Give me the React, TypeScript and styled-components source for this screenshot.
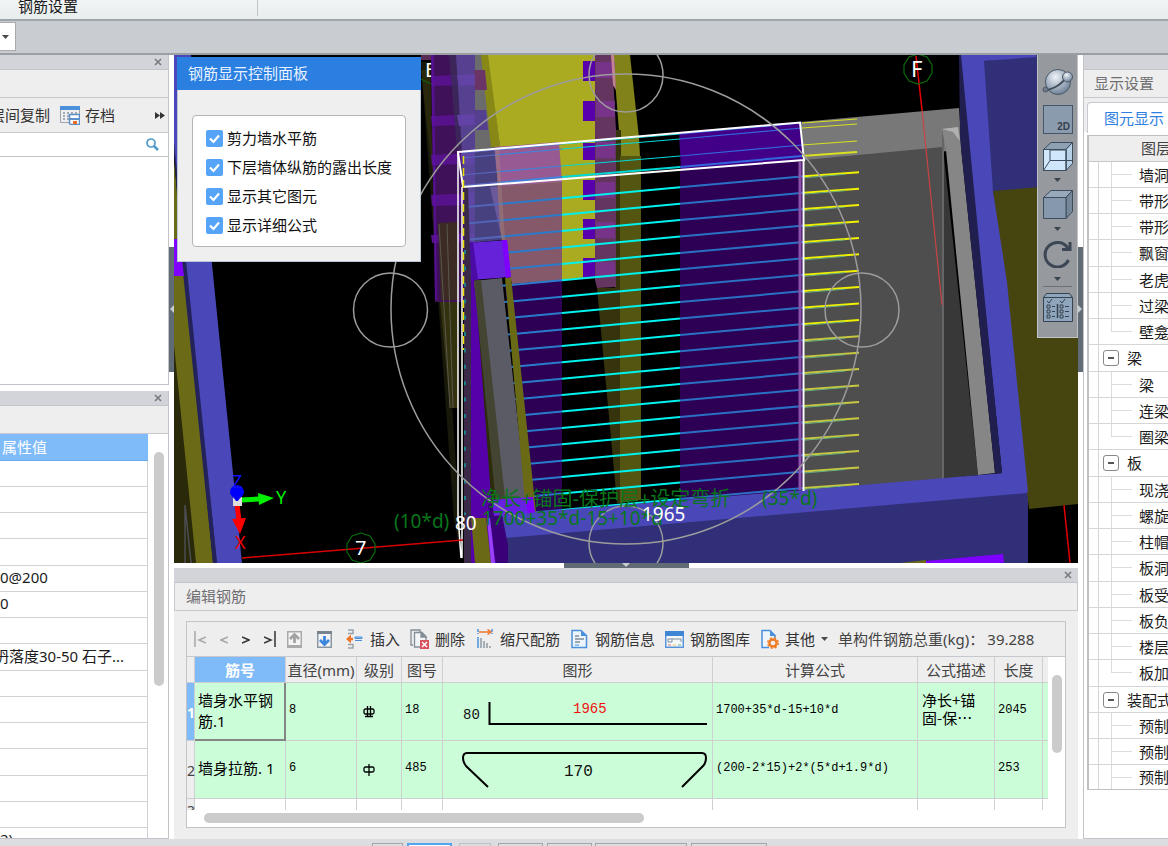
import React from 'react';
import styled, { createGlobalStyle, css } from 'styled-components';

const ui = '"Noto Sans", "Noto Sans CJK SC", sans-serif';
const mono = '"Liberation Mono", "Noto Sans CJK SC", monospace';

const GlobalStyle = createGlobalStyle`
  * { box-sizing: border-box; }
  body { margin: 0; background: #fff; color: #1c1c1c; font: 15px/20px ${ui}; overflow: hidden; }
  button, select, input { font: inherit; color: inherit; margin: 0; padding: 0; border: 0; background: none; }
  ul { list-style: none; margin: 0; padding: 0; }
  svg { display: block; flex: none; }
`;

/* ---------- window frame ---------- */

const Shell = styled.div`
  display: flex;
  flex-direction: column;
  height: 100vh;
  min-height: 640px;
  overflow: hidden;
`;

const Ribbon = styled.header`
  display: flex;
  flex: none;
  height: 21px;
  background: linear-gradient(#f2f5f6, #e7ecec);
  border-bottom: 2px solid #9ea6ac;
`;

const RibbonGroup = styled.div`
  width: 258px;
  height: 16px;
  padding-left: 18px;
  line-height: 12px;
  border-right: 1px solid #c3c3c5;
`;

const OptionBar = styled.div`
  display: flex;
  align-items: center;
  flex: none;
  height: 34px;
  padding-bottom: 1px;
  background: #c9ccd0;
  border-bottom: 2px solid #9a9fa4;
`;

const ComboBox = styled.div`
  display: grid;
  align-items: center;
  width: 16px;
  height: 29px;
  background: #fff;
  border: 1px solid #aaaaac;
  border-left: 0;
  svg, select { grid-area: 1 / 1; }
  svg { margin-left: 2px; pointer-events: none; }
  select { width: 15px; height: 27px; appearance: none; }
`;

const Workspace = styled.main`
  display: grid;
  grid-template-columns: 169px minmax(0, 1fr) 85px;
  flex: 1;
  min-height: 0;
`;

const StatusStrip = styled.footer`
  display: flex;
  flex: none;
  height: 7px;
  padding: 4px 0 0 372px;
  overflow: hidden;
  background: #dcdde0;
`;

const StripButton = styled.button<{ $w: number; $after: number; $tone?: 'active' | 'faint' }>`
  && {
    flex: none;
    width: ${p => p.$w}px;
    height: 22px;
    margin-right: ${p => p.$after}px;
    border: 1px solid #a4a5a8;
    ${p => p.$tone === 'active' && css`background: #fff; border: 2px solid #55a5ee;`}
    ${p => p.$tone === 'faint' && css`border-color: #bfc0c2;`}
  }
`;

/* ---------- docked panels ---------- */

const Column = styled.div`
  display: flex;
  flex-direction: column;
  gap: 6px;
  min-height: 0;
`;

const Dock = styled.section<{ $h?: number }>`
  display: flex;
  flex-direction: column;
  flex: ${p => (p.$h ? `0 0 ${p.$h}px` : '1')};
  min-height: 0;
  overflow: hidden;
  background: #fff;
  border-right: 1px solid #c3c4c8;
  border-bottom: 1px solid #c3c4c8;
`;

const Grip = styled.div`
  display: flex;
  align-items: center;
  justify-content: flex-end;
  flex: none;
  height: 15px;
  padding-right: 5px;
  background: #d3d4d9;
  border-bottom: 1px solid #c3c5cb;
`;

const Caption = styled.div<{ $indent?: number }>`
  flex: none;
  height: 28px;
  padding-left: ${p => p.$indent ?? 0}px;
  line-height: 27px;
  color: #6f6f72;
  background: #eee;
  border-bottom: 1px solid #c6c8ce;
  white-space: nowrap;
`;

const CloseButton = styled.button`
  display: flex;
  align-items: center;
  justify-content: center;
  width: 10px;
  height: 14px;
`;

const CopyBar = styled.div`
  display: flex;
  align-items: center;
  flex: none;
  height: 35px;
  background: #eee;
  border-bottom: 1px solid #c6c8ce;
  color: #333;
`;

const BarButton = styled.button<{ $gap?: number }>`
  display: flex;
  align-items: center;
  gap: ${p => p.$gap ?? 6}px;
  flex: none;
  white-space: nowrap;
  color: #333;
`;

const CopyLabel = styled(BarButton)`&& { margin: 0 10px 0 -10px; }`;
const MoreButton = styled(BarButton)`&& { margin: 0 3px 0 auto; }`;

const SearchRow = styled.label`
  display: flex;
  align-items: center;
  flex: none;
  height: 24px;
  padding-right: 9px;
  border-bottom: 1px solid #c3c4c8;
  input { flex: 1; min-width: 0; height: 22px; outline: 0; }
`;

const PropertyBody = styled.div`
  display: grid;
  grid-template-columns: minmax(0, 1fr) 20px;
  flex: 1;
  min-height: 0;
  overflow: hidden;
`;

const PropertyTable = styled.table`
  width: 100%;
  align-self: start;
  border-collapse: separate;
  border-spacing: 0;
  table-layout: fixed;
  th {
    height: 27px;
    padding: 0 0 0 2px;
    text-align: left;
    font-weight: 400;
    color: #fff;
    background: #7fbbf9;
    border-bottom: 1px solid #6baaf0;
  }
  td {
    height: 26px;
    padding: 0 0 3px;
    white-space: nowrap;
    overflow: hidden;
    border-right: 1px solid #d2d2d4;
    border-bottom: 1px solid #d2d2d4;
  }
  tr:nth-child(4n) td { height: 27px; }
`;

const Shifted = styled.span`margin-left: -6px;`;

const Thumb = styled.div<{ $w?: number; $h?: number }>`
  width: ${p => p.$w ?? 10}px;
  height: ${p => p.$h ?? 10}px;
  background: #cbcbcb;
  border-radius: 5px;
`;

const ThumbTrack = styled.div<{ $top: number; $left?: number }>`
  padding: ${p => p.$top}px 0 0 ${p => p.$left ?? 6}px;
`;

/* ---------- centre ---------- */

const Centre = styled.div`
  display: grid;
  grid-template-columns: 5px minmax(0, 1fr) 5px;
  grid-template-rows: minmax(0, 1fr) 5px auto;
  min-height: 0;
`;

const SideHandle = styled.button`
  && {
    display: flex;
    align-items: center;
    justify-content: center;
    align-self: center;
    width: 5px;
    height: 125px;
    background: #606b76;
  }
`;

const BottomHandle = styled.button`
  && {
    grid-area: 2 / 2;
    display: flex;
    justify-content: center;
    justify-self: center;
    width: 125px;
    height: 5px;
    background: #606b76;
  }
`;

const Viewport = styled.div`
  position: relative;
  min-height: 0;
  overflow: hidden;
  background: #000;
`;

const SceneSvg = styled.svg`
  width: 100%;
  height: 100%;
  font-family: ${ui};
`;

const Dialog = styled.section`
  position: absolute;
  top: 2px;
  left: 3px;
  width: 244px;
  background: #efefef;
  border: 1px solid #b9c6d8;
  border-top: 0;
`;

const DialogTitle = styled.h2`
  margin: 0 -1px;
  padding-left: 11px;
  height: 33px;
  font-size: 15px;
  font-weight: 400;
  line-height: 33px;
  color: #e8f3ff;
  background: #2b7fe0;
`;

const OptionGroup = styled.div`
  display: flex;
  flex-direction: column;
  gap: 9px;
  margin: 25px 14px 14px;
  padding: 12px 0 11px 13px;
  background: #fff;
  border: 1px solid #b5b5b5;
  border-radius: 4px;
`;

const CheckRow = styled.label`
  display: grid;
  grid-template-columns: 17px 1fr;
  column-gap: 4px;
  align-items: center;
  color: #111;
  white-space: nowrap;
  input {
    grid-area: 1 / 1;
    width: 17px;
    height: 17px;
    appearance: none;
    background: #56a4f8;
    border-radius: 2px;
  }
  svg { grid-area: 1 / 1; pointer-events: none; }
`;

const ViewTools = styled.div`
  position: absolute;
  top: 0;
  right: 0;
  display: flex;
  flex-direction: column;
  align-items: center;
  width: 41px;
  padding: 10px 0 14px;
  background: #96999d;
  border: 1px solid #c0c2c5;
  border-top: 0;
`;

const ViewButton = styled.button<{ $h: number }>`
  && {
    display: flex;
    align-items: center;
    justify-content: center;
    width: 32px;
    height: ${p => p.$h}px;
  }
`;

const ViewRule = styled.div`
  width: 29px;
  height: 1px;
  margin-bottom: 4px;
  background: #6d7074;
`;

/* ---------- rebar editor ---------- */

const Editor = styled.section`
  grid-area: 3 / 2;
  background: #eee;
  min-width: 0;
`;

const EditorCaption = styled(Caption)`border-right: 1px solid #c6c8ce; border-left: 1px solid #c6c8ce;`;

const EditorBox = styled.div`
  margin: 10px 12px 11px;
  border: 1px solid #c3c4c8;
  background: #fff;
`;

const EditorTools = styled.div`
  display: flex;
  align-items: center;
  gap: 10px;
  height: 35px;
  padding-left: 7px;
  background: #eee;
  border-bottom: 1px solid #c6c8ce;
  color: #444;
  white-space: nowrap;
  overflow: hidden;
`;

const Pager = styled.div`
  display: flex;
  align-items: center;
  gap: 14px;
  margin-right: 1px;
`;

const IconButtons = styled.div`
  display: flex;
  gap: 15px;
  margin-right: 3px;
`;

const WeightText = styled.output`flex: none; span { margin-left: 3px; }`;

const GridArea = styled.div`
  display: grid;
  grid-template-columns: minmax(0, 1fr) 17px;
  height: 153px;
  overflow: hidden;
`;

const RebarTable = styled.table`
  width: 100%;
  align-self: start;
  border-collapse: separate;
  border-spacing: 0;
  table-layout: fixed;
  font: 12px/18px ${mono};
  th, td { border-right: 1px solid #cfcfd1; border-bottom: 1px solid #cfcfd1; }
  thead th {
    height: 26px;
    padding: 0;
    font: 15px/20px ${ui};
    color: #444;
    background: #eee;
    white-space: nowrap;
  }
  thead th:nth-child(2) { color: #fff; background: #7fbbf9; font-weight: 700; }
  tbody th {
    padding: 3px 0 0;
    font: 14px/18px ${ui};
    color: #444;
    background: #eee;
  }
  td { height: 58px; padding: 0 3px 3px; background: #cbfdd8; color: #000; }
  tbody tr:first-child th { color: #fff; background: #7fbbf9; font-weight: 700; }
  tbody tr:last-child th { vertical-align: top; }
  tr:last-child td { background: #fff; }
  tr > :last-child { border-right: 0; }
`;

const NameCell = styled.td<{ $current?: boolean }>`
  && { padding: 0 0 3px 3px; font: 15px/21px ${ui}; }
  ${p => p.$current && css`&& { padding-bottom: 1px; border: 2px solid #858585; border-width: 0 2px 2px 0; }`}
`;

const DescCell = styled.td`
  && { padding: 0 4px 5px; font: 15px/18px "Noto Sans CJK SC", sans-serif; }
  white-space: pre-line;
`;

const DrawingCell = styled.td`&& { padding: 0; } svg { font-family: ${mono}; }`;

const GradeCell = styled.td`&& { padding: 0 0 0 6px; }`;

const BottomTrack = styled.div`height: 17px; padding: 3px 0 0 17px;`;

/* ---------- display settings ---------- */

const SettingsDock = styled.section`
  display: flex;
  flex-direction: column;
  min-height: 0;
  overflow: hidden;
  border-left: 1px solid #c3c4c8;
  border-bottom: 1px solid #c3c4c8;
  white-space: nowrap;
`;

const TabBar = styled.div`
  display: flex;
  flex: none;
  height: 34px;
  padding: 4px 0 0 3px;
  background: #eee;
`;

const Tab = styled.button`
  && {
    flex: none;
    width: 92px;
    height: 31px;
    padding-left: 16px;
    text-align: left;
    color: #2f80e0;
    background: #fff;
    border: 1px solid #c6cad3;
    border-bottom: 0;
    border-radius: 4px 0 0 0;
  }
`;

const LayerTree = styled.div`
  margin: 3px 0 0 3px;
  border: 1px solid #bfc0c3;
  border-left-width: 2px;
  border-right: 0;
`;

const TreeHead = styled.div`
  height: 26px;
  padding-left: 52px;
  line-height: 25px;
  color: #444;
  background: #eee;
  border-bottom: 1px solid #c6c6c8;
`;

const TreeRow = styled.li`
  display: grid;
  grid-template-columns: 10px 1fr;
  height: 26px;
  border-bottom: 1px solid #d6d6d8;
  &:nth-child(4n) { height: 27px; }
  &:last-child { height: 24px; border-bottom: 0; }
  &::before { content: ''; border-right: 1px solid #d6d6d8; }
`;

const TreeCell = styled.div<{ $group?: boolean }>`
  display: flex;
  align-items: center;
  gap: ${p => (p.$group ? 8 : 7)}px;
  padding-left: ${p => (p.$group ? 4 : 12)}px;
`;

const Branch = styled.span<{ $last?: boolean }>`
  display: flex;
  flex-direction: column;
  align-self: stretch;
  width: 21px;
  &::before {
    content: '';
    height: 12px;
    border: solid #dcdcde;
    border-width: 0 0 1px 1px;
  }
  &::after {
    content: '';
    flex: 1;
    border-left: ${p => (p.$last ? 0 : 1)}px solid #dcdcde;
  }
`;

const FoldButton = styled.button`
  && {
    display: flex;
    align-items: center;
    justify-content: center;
    width: 16px;
    height: 16px;
    background: #fff;
    border: 1px solid #888;
    border-radius: 3px;
  }
  &::before { content: ''; width: 6px; height: 2px; background: #555; }
`;

/* ---------- small drawings ---------- */

const Caret = ({ color = '#4a4a4a' }: { color?: string }) => (
  <svg width="7" height="4" viewBox="0 0 7 4"><path d="M0 0h7L3.500 4z" fill={color} /></svg>
);

const CloseX = () => (
  <svg width="8" height="8" viewBox="0 0 8 8"><path d="M1 1l6 6M7 1L1 7" stroke="#777a7e" strokeWidth="1.600" /></svg>
);

const ArchiveIcon = () => (
  <svg width="20" height="19" viewBox="0 0 20 19">
    <path d="M.5 1v15.500H9M19.500 1v7" fill="none" stroke="#9aa5b0" />
    <path d="M0 0h20v4H0z" fill="#4a90dc" />
    <path d="M3 7h2M7 7h2M11 7h2M15 7h2M3 10h2M7 10h2M3 13h2M7 13h2" stroke="#8795a3" strokeWidth="1.500" />
    <path d="M9.500 8.500h10v10h-9l-1-1z" fill="#fff" stroke="#5b8fc8" strokeWidth="1.500" />
    <path d="M9 12h11v2H9z" fill="#5b8fc8" />
    <path d="M13 15h4v3h-4z" fill="#f26a1b" />
  </svg>
);

const SearchIcon = () => (
  <svg width="13" height="13" viewBox="0 0 13 13" fill="none" stroke="#4f9bc9">
    <circle cx="5" cy="5" r="4" strokeWidth="1.700" /><path d="M8 8l4 4" strokeWidth="2.500" />
  </svg>
);

const PageMoveIcon = ({ down }: { down?: boolean }) => (
  <svg width="15" height="17" viewBox="0 0 15 17">
    <rect x=".75" y=".75" width="13.500" height="15.500" fill="#f4f4f4" stroke={down ? '#8a97a3' : '#aaa'} strokeWidth="1.500" />
    <path d={down ? 'M0 0h15v3H0z' : 'M0 14h15v3H0z'} fill={down ? '#77838e' : '#aaa'} />
    <path d={down ? 'M7.500 5v8M3 9l4.500 4.500L12 9' : 'M7.500 12V4M3 8l4.500-4.500L12 8'} fill="none" stroke={down ? '#3c86dc' : '#a3a3a3'} strokeWidth="2.800" />
  </svg>
);

const InsertIcon = () => (
  <svg width="19" height="20" viewBox="0 0 19 20" fill="none">
    <path d="M3 1h5v3.500H3M3 19h5v-3.500H3" stroke="#98a3ad" strokeWidth="1.500" />
    <path d="M8 10H4" stroke="#f0762c" strokeWidth="2.500" /><path d="M6 5.500v9L1 10z" fill="#f0762c" />
    <path d="M10 8h7v1.500h-7zM10 11.500h7" fill="#a7ccf2" stroke="#4b8fd8" />
  </svg>
);

const DeleteIcon = () => (
  <svg width="19" height="20" viewBox="0 0 19 20" fill="none" stroke="#838e98" strokeWidth="1.300">
    <path d="M3 16H1V1h9v2" /><path d="M4.500 3.500H12l4 4V18h-11.500z" fill="#f3f4f5" /><path d="M11 3v5h5z" fill="#838e98" />
    <path d="M10 11h9v9h-9z" fill="#d9515a" stroke="none" /><path d="M12 13l5 5M17 13l-5 5" stroke="#fff" strokeWidth="1.500" />
  </svg>
);

const ScaleIcon = () => (
  <svg width="19" height="20" viewBox="0 0 19 20" fill="none">
    <path d="M3 0v5M17 0v5" stroke="#4a90dc" strokeWidth="1.500" strokeDasharray="3 1" />
    <path d="M4 3h11M12.500 .5L16 3l-3.500 2.500" stroke="#f0762c" strokeWidth="1.500" />
    <path d="M3 8v11" stroke="#4a90dc" strokeWidth="1.500" />
    <path d="M6 9v10M9 12v7M12 14v5M15 17v2" stroke="#8f9aa4" strokeWidth="1.500" />
  </svg>
);

const InfoIcon = () => (
  <svg width="19" height="20" viewBox="0 0 19 20" fill="none">
    <path d="M2 1.500h9l5.500 5v12H2z" fill="#edf4fb" stroke="#4a90dc" strokeWidth="1.500" />
    <path d="M11 1v6h6z" fill="#4a90dc" />
    <path d="M5 7h4M5 10h9M5 13h5" stroke="#7f8d9a" strokeWidth="1.300" /><path d="M5 16h4" stroke="#4a90dc" />
  </svg>
);

const LibraryIcon = () => (
  <svg width="19" height="17" viewBox="0 0 19 17" fill="none">
    <rect x=".75" y=".75" width="17.500" height="15.500" fill="#f4f8fb" stroke="#5795d8" strokeWidth="1.500" />
    <path d="M0 0h19v5H0z" fill="#3f86d4" />
    <path d="M3 8h4v3H3zM7 8h9v3" stroke="#7f8d9a" />
    <path d="M3 14h3" stroke="#e87373" /><path d="M8 14h3" stroke="#ecc44a" /><path d="M13 14h3" stroke="#5bb98a" />
  </svg>
);

const OtherIcon = () => (
  <svg width="19" height="20" viewBox="0 0 19 20" fill="none">
    <path d="M9 18.500H2V1.500h8l5 5V9" fill="#edf4fb" stroke="#4a90dc" strokeWidth="1.500" />
    <path d="M10 1v6h6z" fill="#4a90dc" />
    <circle cx="13" cy="14" r="3.600" stroke="#f07d24" strokeWidth="2.500" />
    <circle cx="13" cy="14" r="5.300" stroke="#f07d24" strokeWidth="1.400" strokeDasharray="2.200 2" />
  </svg>
);

const OrbitIcon = () => (
  <svg width="32" height="28" viewBox="0 0 32 28">
    <defs><radialGradient id="ball" cx=".4" cy=".3" r=".7"><stop offset="0" stopColor="#eef3f8" /><stop offset="1" stopColor="#71839a" /></radialGradient></defs>
    <circle cx="16" cy="14" r="12.500" fill="url(#ball)" stroke="#485868" />
    <path d="M3 22c6 0 17-5 21-13" fill="none" stroke="#3e4b59" strokeWidth="1.800" />
    <circle cx="25.500" cy="9" r="5" fill="url(#ball)" stroke="#485868" />
    <circle cx="3.500" cy="21.500" r="2.500" fill="#6f7b88" stroke="#485868" />
  </svg>
);

const PlanIcon = () => (
  <svg width="30" height="29" viewBox="0 0 30 29">
    <rect x=".5" y=".5" width="29" height="28" fill="#8b9bae" stroke="#46566a" />
    <text x="27" y="25" textAnchor="end" fontFamily="Liberation Sans, sans-serif" fontSize="10" fontWeight="700" fill="#35404c">2D</text>
  </svg>
);

const CubeIcon = ({ wire }: { wire?: boolean }) => (
  <svg width="30" height="29" viewBox="0 0 30 29" stroke="#3d4c5c" strokeLinejoin="round">
    <path d="M.5 7.500L8 .5h21.500L23 7.500z" fill={wire ? '#8ea0b4' : '#98a9bc'} />
    <path d="M23 7.500l6.500-7v21l-6.500 7z" fill={wire ? '#b6d0e8' : '#75879b'} />
    <path d="M.5 7.500H23v21H.5z" fill={wire ? '#cfe6fb' : '#8598ae'} />
    {wire && <path d="M.5 28.500L7 18.500h22.500M7 18.500V8M23 7.500v21M7 8h15" fill="none" />}
  </svg>
);

const RotateIcon = () => (
  <svg width="30" height="28" viewBox="0 0 30 28" fill="none" stroke="#3b4754" strokeWidth="3">
    <path d="M25.500 20A12.300 12.300 0 1 1 25 8.500" /><path d="M27 2v7.500h-8" />
  </svg>
);

const ListIcon = () => (
  <svg width="30" height="29" viewBox="0 0 30 29" fill="none" stroke="#35424f">
    <path d="M.5 4.500l3-4h23l3 4v24H.5z" fill="#8fa5bb" /><path d="M.5 4.500h29" />
    <path d="M14.500 11v14" strokeWidth="1.500" />
    <path d="M4 8l2 2 3-4M17 8l2 2 3-4" />
    <path d="M4 12h3v3H4zM4 17h3v3H4zM4 22h3v3H4zM17 12h3v3h-3zM17 17h3v3h-3zM17 22h3v3h-3z" />
    <path d="M9 13.500h3M9 18.500h3M9 23.500h3M22 13.500h4M22 18.500h4M22 23.500h4" />
  </svg>
);

/* ---------- 3D scene ---------- */

const P = ({ d, f, o }: { d: string; f: string; o?: number }) => <polygon points={d} fill={f} opacity={o} />;

const bars = Array.from({ length: 20 }, (_, i) => 187.3 + i * 16.4);
const topBars = [134, 139, 156, 167];

const Scene = () => (
  <SceneSvg viewBox="174 55 904 508" preserveAspectRatio="xMidYMid slice" role="img" aria-label="钢筋三维视图">
    {/* left wall */}
    <P d="174,170 182,263 213,563 174,563" f="#2a290a" />
    <P d="174,160 176,180 213,563 196,563 174,345" f="#6b6a16" />
    <P d="170,100 176,160 187,263 217,563 213,563 182,263" f="#23225a" />
    <P d="165,55 191,55 242,563 217,563" f="#4a48b8" />
    <P d="174,239 179,239 184,276 174,276" f="#8000ff" />
    <path d="M185 563V505l6 58" fill="none" stroke="#4c4c55" strokeWidth="1.500" />

    {/* tower behind axis E */}
    <P d="421,62 431,62 462,563 454,520" f="#17170a" />
    <P d="421,55 431,55 431,60 421,60" f="#5a2c55" />
    <P d="421,70 430,70 436,300 446,300" f="#2a280c" />
    <path d="M421 79l12 6" stroke="#0a6a0a" />
    <text x="425" y="77" fontSize="20" fill="#fff">E</text>
    <P d="431,55 475,55 475,302 435,302" f="#3e1158" />
    {[[74, 85], [114, 125], [153, 164], [193, 205], [233, 242]].map(([a, b]) => (
      <P key={a} d={`431,${a + 2} 474,${a} 474,${b} 432,${b + 1}`} f="#56128a" />
    ))}
    <P d="431,55 434,55 437,300 435,300" f="#6010a8" o={0.7} />
    <P d="449,55 457,55 462,150 457,150" f="#3c2c5a" o={0.8} />
    <P d="438,223 458,222 458,300 441,300" f="#3c2a24" />
    <P d="440,302 458,302 458,408 450,408" f="#34320e" />
    <path d="M439 224l11 184M447 224l6 184" fill="none" stroke="#5a5850" />

    {/* yellow wall */}
    <P d="474,55 488,55 500,147 474,150" f="#6b6b6b" />
    <P d="481,55 489,55 500,147 491,147" f="#888817" />
    <P d="456,55 475,55 475,152 462,152" f="#564090" />
    <P d="474,70 485,70 487,90 475,90" f="#6a3566" />
    <P d="474,110 486,110 488,130 475,130" f="#554090" />
    {[74, 114].map(y => <P key={y} d={`457,${y + 1} 475,${y} 475,${y + 11} 459,${y + 12}`} f="#6242a4" />)}
    <P d="488,55 595,55 595,278 512,283 500,147" f="#aaab20" />
    <P d="494,147 559,142 562,182 498,187" f="#985a92" />
    <P d="490,187 562,182 562,280 512,284" f="#85586a" />
    {[61, 101, 143, 180, 219, 258].map(y => <rect key={y} x="583" y={y} width="13" height={y === 143 ? 17 : 20} fill="#5800ac" />)}
    <P d="613,55 630,55 639,138 640,156 621,156" f="#82821a" />
    <P d="615,130 621,130 621,503 617,503 597,288 615,288" f="#35340d" />
    <P d="620,156 641,156 641,500 620,503" f="#555512" />
    <P d="595,55 612,55 616,130 616,287 597,288 595,280" f="#63355f" />
    {[62, 101, 142, 182, 222, 262].map(y => <rect key={y} x="596" y={y} width="19" height="16" fill="#7c3392" opacity=".8" />)}
    <P d="611,55 614,55 616,90 613,85" f="#c28494" />

    {/* selected wall */}
    <P d="679,132 800,122 804,160 681,171" f="#420088" />
    <P d="680,171 804,160 804,493 680,503" f="#2d0055" />
    <P d="505,285 562,280 562,512 530,513" f="#2d0055" />

    {/* grey slab */}
    <P d="800,122 959,108 962,150 804,162" f="#787878" />
    <P d="804,160 943,147 943,479 804,491" f="#4e4e4e" />
    <P d="943,147 978,475 943,479" f="#383838" />
    <path d="M943 130v349" stroke="#666" strokeWidth="2" />
    <P d="942,129 958,127 960,138 995,473 978,475 946,150" f="#868686" />
    <P d="942,129 958,127 960,141 953,132" f="#b0b0b0" />

    {/* reinforcement */}
    {topBars.map((y, i) => (
      <g key={y} strokeWidth={i === 3 ? 2 : 1.2}>
        <path d={`M462 ${y + 19}L562 ${y + 10}`} stroke="#3f83dc" />
        <path d={`M562 ${y + 10}L680 ${y}`} stroke="#00d8d8" />
        <path d={`M680 ${y}L802 ${y - 11}`} stroke="#3565dc" />
        <path d={`M802 ${y - 11}L857 ${y - 15}`} stroke="#d8e020" />
      </g>
    ))}
    {bars.map(y => (
      <g key={y} strokeWidth="2">
        <path d={`M464 ${y + 20}L562 ${y + 11}`} stroke="#2b7bcd" />
        <path d={`M562 ${y + 11}L680 ${y}`} stroke="#00f2ee" />
        <path d={`M680 ${y}L804 ${y - 11}`} stroke="#2b70c4" />
        <path d={`M804 ${y - 11}L859 ${y - 15}`} stroke={y < 345 ? '#f0f000' : '#c8c840'} />
        <path d={`M804 ${y - 9.5}L845 ${y - 13}`} stroke="#68b080" strokeWidth="1" />
      </g>
    ))}
    <P d="461,152 495,149 501,240 468,243" f="#625ab0" o={0.72} />
    <P d="495,148 499,148 505,240 501,240" f="#a08080" o={0.5} />

    {/* slanted column */}
    <P d="471,240 476,280 488,380 505,563 471,563" f="#5500a8" />
    <P d="475,280 482,280 502,563 492,510" f="#2c2c0a" />
    <P d="474,281 502,278 528,515 500,515" f="#5b5b65" />
    <P d="474,281 481,280 507,515 497,515" f="#444432" />
    <P d="505,278 511,277 536,512 526,513" f="#6a6a16" />
    <P d="467,243 507,240 511,277 472,280" f="#6622d8" />
    <P d="467,243 473,242 478,280 472,280" f="#4a0ca4" />
    <P d="502,240 507,240 511,277 506,278" f="#8000ff" />
    <P d="464,187 468,187 471,280 471,563 464,563" f="#3a2a48" />

    {/* front beam */}
    <P d="502,515 535,512 804,490 1003,473 1028,490 1028,494 505,539" f="#4a48b8" />
    <P d="505,538 1028,493 1028,563 505,563" f="#302f78" />
    <P d="502,515 508,545 508,563 496,563 488,505 500,500" f="#3a0078" />
    <P d="492,500 531,497 535,513 494,516" f="#6622e0" />
    <P d="525,498 533,497 535,512 528,513" f="#8000ff" />
    <P d="471,518 486,518 491,563 475,563" f="#6a6a16" />
    <P d="487,518 490,518 495,563 491,563" f="#9a40ff" />
    <P d="926,561 1003,554 1004,563 926,563" f="#8000ff" />
    <P d="900,563 926,560 926,563" f="#6a6a16" />

    {/* right wall */}
    <P d="959,55 984,61 1036,55 1078,55 1078,190 993,191" f="#302f78" />
    <P d="993,191 1078,184 1078,504 1029,509" f="#46450f" />
    <P d="959,55 1036,55 1036,57 984,61 993,191 1007,282 1028,492 1002,473" f="#4a48b8" />
    <P d="959,55 961,55 983,282 1002,473 995,473 975,282 960,138" f="#201f50" />

    {/* selection edges */}
    <g fill="none" stroke="#fff" strokeWidth="2">
      <path d="M458 152L800 122.500L804 160L463 187z" />
      <path d="M458 152V515L461 558M462 187V558" strokeWidth="1.500" />
      <path d="M803.500 160V491" />
      <path d="M800 162V490" stroke="#8a55a8" strokeWidth="3" />
      <path d="M463.500 156V350" stroke="#e8e000" strokeDasharray="8 4" strokeWidth="1.500" />
      <path d="M465 250V515" stroke="#20808a" strokeDasharray="4 12.400" />
    </g>

    {/* orbit guides */}
    <g fill="none" stroke="#9c9c9c" strokeWidth="1.500">
      <circle cx="626" cy="309" r="235" />
      <circle cx="626" cy="75" r="37" />
      <circle cx="390.500" cy="310" r="37" />
      <circle cx="862" cy="310" r="37" />
      <circle cx="626" cy="543" r="37" />
    </g>

    {/* grid axes */}
    <path d="M916 56L922 110" stroke="#e80000" strokeWidth="1.500" />
    <path d="M922 110L942 305" stroke="#c84444" strokeWidth="1.200" />
    <path d="M242 558L463 540" stroke="#d80000" strokeWidth="1.500" />
    <path d="M1064 505L1070 563" stroke="#e00000" strokeWidth="1.500" />
    <g fill="none" stroke="#0b6a0b" strokeWidth="1.200">
      <path d="M918 54l9 3 5 8v8l-5 8-9 3-9-3-5-8v-8l5-8z" />
      <path d="M361 533l9 3 5 8v8l-5 8-9 3-9-3-5-8v-8l5-8z" />
    </g>
    <text x="911" y="77" fontSize="22" fill="#fff">F</text>
    <text x="355" y="555" fontSize="20" fill="#fff">7</text>

    {/* coordinate triad */}
    <path d="M241 500l18-1" stroke="#00f000" strokeWidth="5" /><path d="M258 493l16 5-15 7z" fill="#00f000" />
    <path d="M237 504l2 17" stroke="#f00" strokeWidth="5" /><path d="M232 519l14-1-6 16z" fill="#f00" />
    <path d="M233 497h9v9h-9z" fill="#ddd" />
    <path d="M230 492a7 7 0 0 1 14 0c0 4-4 5-6 9h-2c-2-4-6-5-6-9z" fill="#0000f8" />
    <g fontSize="18"><text x="232" y="488" fill="#1010f0">Z</text><text x="276" y="504" fill="#00f000">Y</text><text x="235" y="549" fill="#f00000">X</text></g>

    {/* dimension texts */}
    <g fontSize="19" fill="#08761c">
      <text x="394" y="528">(10*d)</text>
      <text x="481" y="506" fontSize="20">净长+锚固-保护层+设定弯折</text>
      <text x="482" y="525">1700+35*d-15+10*d</text>
      <text x="762" y="505">(35*d)</text>
      <text x="455" y="530" fill="#fff">80</text>
      <text x="642" y="521" fill="#fff">1965</text>
    </g>
  </SceneSvg>
);

/* ---------- data ---------- */

const displayOptions = ['剪力墙水平筋', '下层墙体纵筋的露出长度', '显示其它图元', '显示详细公式'];

const properties = ['', '', '', '', '0@200', '0', '', '坍落度30-50 石子...', '', '', '', '', '', '', '2)'];

const layers: { name: string; group?: boolean; last?: boolean }[] = [
  { name: '墙洞' }, { name: '带形' }, { name: '带形' }, { name: '飘窗' }, { name: '老虎' }, { name: '过梁' }, { name: '壁龛', last: true },
  { name: '梁', group: true }, { name: '梁' }, { name: '连梁' }, { name: '圈梁', last: true },
  { name: '板', group: true }, { name: '现浇' }, { name: '螺旋' }, { name: '柱帽' }, { name: '板洞' }, { name: '板受' }, { name: '板负' }, { name: '楼层' }, { name: '板加', last: true },
  { name: '装配式', group: true }, { name: '预制' }, { name: '预制' }, { name: '预制' },
];

const columnWidths = [8, 91, 71, 45, 41, 270, undefined, 77, 48, 5];
const columnNames = ['', '筋号', '直径(mm)', '级别', '图号', '图形', '计算公式', '公式描述', '长度', ''];

const GradeMark = ({ strokes }: { strokes: number }) => (
  <svg width="12" height="12" viewBox="0 0 12 12" fill="none" stroke="#000" strokeWidth="1.300">
    <rect x="1" y="3" width="10" height="5" rx="1.500" />
    {strokes > 1 ? <path d="M4.500 0v11M7.500 0v11M2 10.500h8" /> : <path d="M6 0v12" />}
  </svg>
);

const StraightBar = () => (
  <svg width="269" height="56" viewBox="0 0 269 56">
    <path d="M46.500 18v22H264" fill="none" stroke="#000" strokeWidth="2" />
    <text x="20" y="35" fontSize="14" fill="#111">80</text>
    <text x="130" y="29" fontSize="14" fill="#f01010">1965</text>
  </svg>
);

const HookedBar = () => (
  <svg width="269" height="56" viewBox="0 0 269 56">
    <path d="M45 45L23 24q-3-4-3-8 0-5 4-5h235q4 0 4 5 0 5-3 8L239 45" fill="none" stroke="#000" strokeWidth="2" />
    <text x="121" y="34" fontSize="16" fill="#111">170</text>
  </svg>
);

const views = [
  { name: '动态观察', icon: <OrbitIcon />, h: 34 },
  { name: '二维', icon: <PlanIcon />, h: 41 },
  { name: '线框', icon: <CubeIcon wire />, h: 32 },
  { name: '线框选项', icon: <Caret color="#39444f" />, h: 16 },
  { name: '实体', icon: <CubeIcon />, h: 33 },
  { name: '实体选项', icon: <Caret color="#39444f" />, h: 16 },
  { name: '旋转', icon: <RotateIcon />, h: 34 },
  { name: '旋转选项', icon: <Caret color="#39444f" />, h: 15 },
];

const tools = [
  { name: '插入', icon: <InsertIcon /> }, { name: '删除', icon: <DeleteIcon /> }, { name: '缩尺配筋', icon: <ScaleIcon /> },
  { name: '钢筋信息', icon: <InfoIcon /> }, { name: '钢筋图库', icon: <LibraryIcon /> }, { name: '其他', icon: <OtherIcon />, menu: true },
];

const PagerButton = styled.button<{ $off?: boolean }>`
  && {
    display: flex;
    align-items: center;
    color: ${p => (p.$off ? '#a8a8a8' : '#333')};
  }
`;

const PagerMark = ({ bar, back }: { bar?: boolean; back?: boolean }) => (
  <svg width={bar ? 12 : 8} height="16" viewBox={`0 0 ${bar ? 12 : 8} 16`} fill="none" stroke="currentColor" strokeWidth="1.500">
    {back ? <path d={bar ? 'M1 0v16M12 6L5 9l7 3' : 'M8 6L1 9l7 3'} /> : <path d={bar ? 'M11 0v16M0 6l7 3L0 12' : 'M0 6l7 3L0 12'} />}
  </svg>
);

const Close = () => <CloseButton aria-label="关闭"><CloseX /></CloseButton>;

export default function App() {
  return (
    <Shell lang="zh-CN">
      <GlobalStyle />
      <Ribbon><RibbonGroup>钢筋设置</RibbonGroup></Ribbon>
      <OptionBar>
        <ComboBox><select aria-label="楼层" /><Caret /></ComboBox>
      </OptionBar>

      <Workspace>
        <Column>
          <Dock $h={330}>
            <Grip><Close /></Grip>
            <Caption />
            <CopyBar>
              <CopyLabel>层间复制</CopyLabel>
              <BarButton $gap={5}><ArchiveIcon />存档</BarButton>
              <MoreButton aria-label="更多">
                <svg width="10" height="7" viewBox="0 0 10 7"><path d="M0 0l5 3.500L0 7zM5 0l5 3.500L5 7z" fill="#333" /></svg>
              </MoreButton>
            </CopyBar>
            <SearchRow><input type="search" aria-label="搜索构件" /><SearchIcon /></SearchRow>
          </Dock>
          <Dock>
            <Grip><Close /></Grip>
            <Caption />
            <PropertyBody>
              <PropertyTable>
                <thead><tr><th>属性值</th></tr></thead>
                <tbody>
                  {properties.map((value, i) => (
                    <tr key={i}><td>{value.length > 6 ? <Shifted>{value}</Shifted> : value}</td></tr>
                  ))}
                </tbody>
              </PropertyTable>
              <ThumbTrack $top={18}><Thumb $h={234} /></ThumbTrack>
            </PropertyBody>
          </Dock>
        </Column>

        <Centre>
          <SideHandle aria-label="收起左侧"><svg width="5" height="8" viewBox="0 0 5 8"><path d="M5 0v8L1 4z" fill="#c8cdd2" /></svg></SideHandle>
          <Viewport>
            <Scene />
            <Dialog>
              <DialogTitle>钢筋显示控制面板</DialogTitle>
              <OptionGroup>
                {displayOptions.map(option => (
                  <CheckRow key={option}>
                    <input type="checkbox" defaultChecked />
                    <svg width="17" height="17" viewBox="0 0 17 17"><path d="M4 8.500l3.500 3.500L13 5.500" fill="none" stroke="#fff" strokeWidth="2.200" /></svg>
                    {option}
                  </CheckRow>
                ))}
              </OptionGroup>
            </Dialog>
            <ViewTools>
              {views.map(v => <ViewButton key={v.name} aria-label={v.name} $h={v.h}>{v.icon}</ViewButton>)}
              <ViewRule />
              <ViewButton aria-label="显示列表" $h={32}><ListIcon /></ViewButton>
            </ViewTools>
          </Viewport>
          <SideHandle aria-label="收起右侧"><svg width="5" height="8" viewBox="0 0 5 8"><path d="M0 0v8l4-4z" fill="#c8cdd2" /></svg></SideHandle>
          <BottomHandle aria-label="收起底部"><svg width="8" height="4" viewBox="0 0 8 4"><path d="M0 0h8L4 4z" fill="#c8cdd2" /></svg></BottomHandle>

          <Editor>
            <Grip><Close /></Grip>
            <EditorCaption $indent={11}>编辑钢筋</EditorCaption>
            <EditorBox>
              <EditorTools>
                <Pager>
                  <PagerButton $off aria-label="首行"><PagerMark bar back /></PagerButton>
                  <PagerButton $off aria-label="上一行"><PagerMark back /></PagerButton>
                  <PagerButton aria-label="下一行"><PagerMark /></PagerButton>
                  <PagerButton aria-label="末行"><PagerMark bar /></PagerButton>
                </Pager>
                <IconButtons>
                  <BarButton aria-label="上移"><PageMoveIcon /></BarButton>
                  <BarButton aria-label="下移"><PageMoveIcon down /></BarButton>
                </IconButtons>
                {tools.map(t => (
                  <BarButton key={t.name}>{t.icon}{t.name}{t.menu && <Caret />}</BarButton>
                ))}
                <WeightText>单构件钢筋总重(kg)：<span>39.288</span></WeightText>
              </EditorTools>
              <GridArea>
                <RebarTable>
                  <colgroup>{columnWidths.map((w, i) => <col key={i} width={w} />)}</colgroup>
                  <thead><tr>{columnNames.map((n, i) => <th key={i}>{n}</th>)}</tr></thead>
                  <tbody>
                    <tr>
                      <th scope="row">1</th><NameCell $current>墙身水平钢筋.1</NameCell><td>8</td>
                      <GradeCell><GradeMark strokes={2} /></GradeCell><td>18</td>
                      <DrawingCell><StraightBar /></DrawingCell>
                      <td>1700+35*d-15+10*d</td><DescCell>{'净长+锚\n固-保…'}</DescCell><td>2045</td><td />
                    </tr>
                    <tr>
                      <th scope="row">2</th><NameCell>墙身拉筋. 1</NameCell><td>6</td>
                      <GradeCell><GradeMark strokes={1} /></GradeCell><td>485</td>
                      <DrawingCell><HookedBar /></DrawingCell>
                      <td>(200-2*15)+2*(5*d+1.9*d)</td><td /><td>253</td><td />
                    </tr>
                    <tr>
                      <th scope="row">3</th>{columnNames.slice(1).map((_, i) => <td key={i} />)}
                    </tr>
                  </tbody>
                </RebarTable>
                <ThumbTrack $top={18} $left={4}><Thumb $h={78} /></ThumbTrack>
              </GridArea>
              <BottomTrack><Thumb $w={440} /></BottomTrack>
            </EditorBox>
          </Editor>
        </Centre>

        <SettingsDock>
          <Grip />
          <Caption $indent={10}>显示设置</Caption>
          <TabBar><Tab>图元显示</Tab></TabBar>
          <LayerTree>
            <TreeHead>图层</TreeHead>
            <ul>
              {layers.map((layer, i) => (
                <TreeRow key={i}>
                  <TreeCell $group={layer.group}>
                    {layer.group ? <FoldButton aria-label={`折叠${layer.name}`} /> : <Branch $last={layer.last} />}
                    {layer.name}
                  </TreeCell>
                </TreeRow>
              ))}
            </ul>
          </LayerTree>
        </SettingsDock>
      </Workspace>

      <StatusStrip>
        <StripButton $w={31} $after={4} /><StripButton $w={45} $after={7} $tone="active" />
        <StripButton $w={32} $after={7} $tone="faint" /><StripButton $w={45} $after={4} />
        <StripButton $w={45} $after={3} /><StripButton $w={92} $after={4} /><StripButton $w={76} $after={0} />
      </StatusStrip>
    </Shell>
  );
}
